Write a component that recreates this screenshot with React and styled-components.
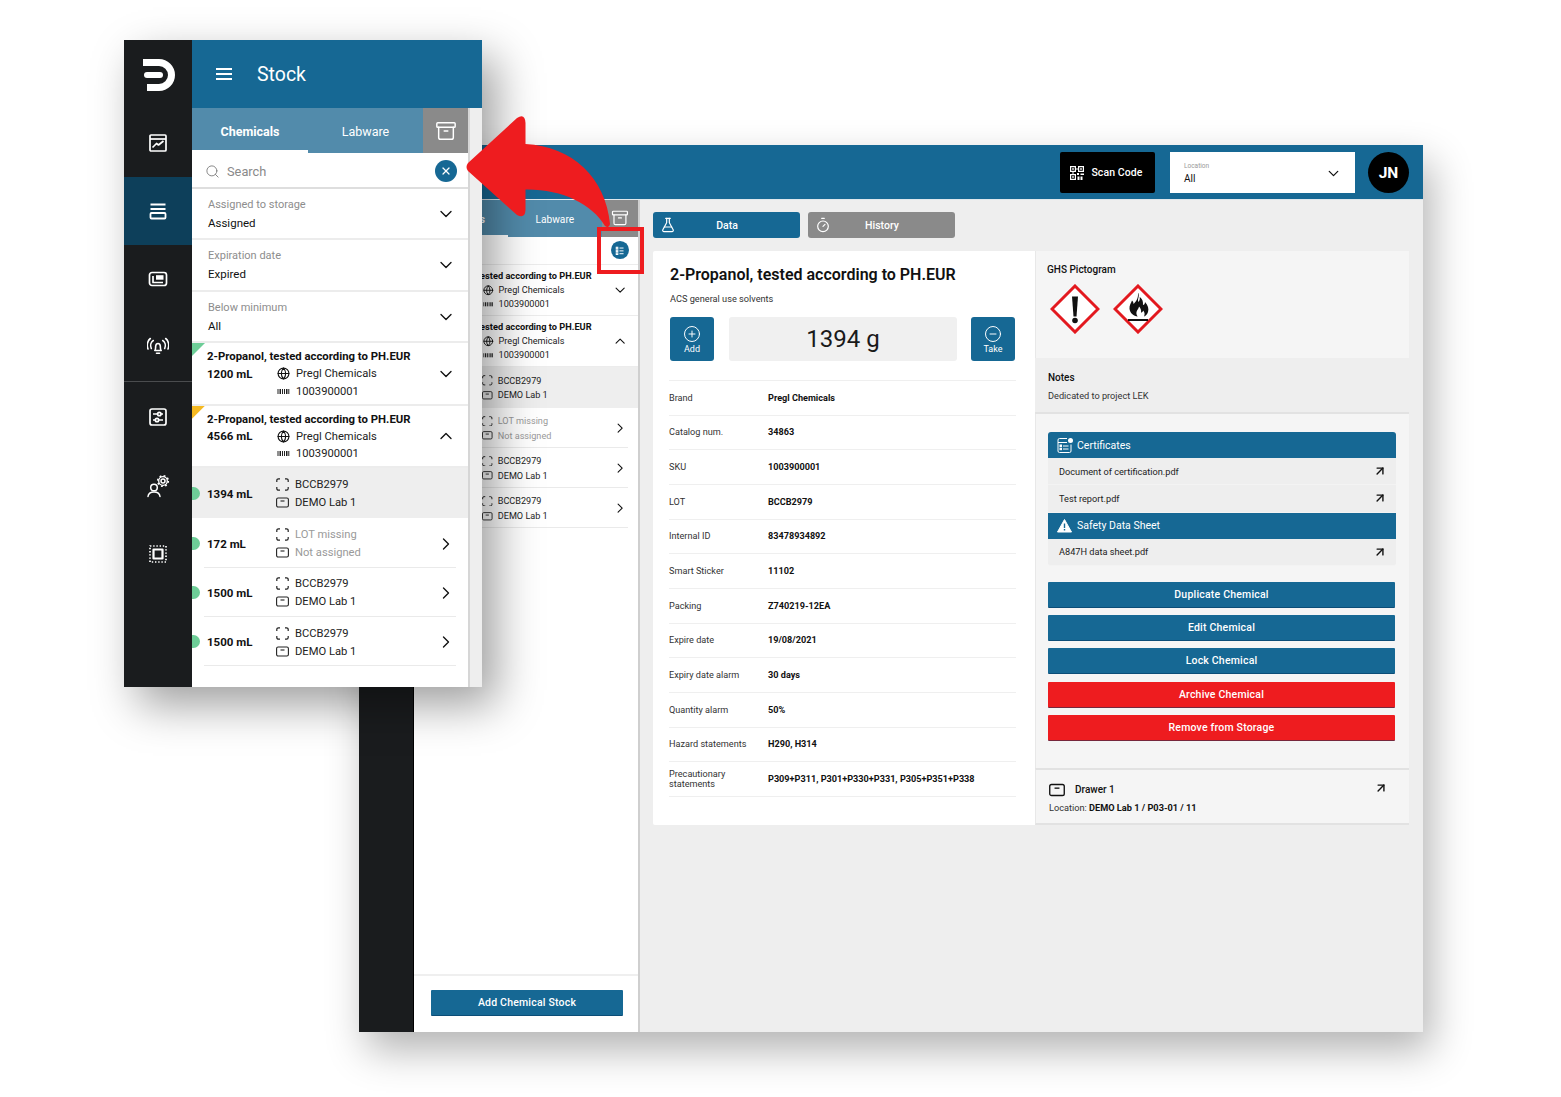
import React from 'react';
import styled, { createGlobalStyle } from 'styled-components';
import { Archive, Search, X, ChevronDown, ChevronUp, ChevronRight, Globe, FlaskConical, Timer, CirclePlus, CircleMinus, ArrowUpRight } from 'lucide-react';

const BLUE = '#166894';
const DARK = '#1a1c1e';
const GREEN = '#6dcd97';
const RED = '#ee1c1f';

const Global = createGlobalStyle`
  html, body { margin: 0; padding: 0; background: #fff; }
  * { box-sizing: border-box; }
  body { font-family: Roboto, "Liberation Sans", sans-serif; color: #111; }
`;

const Stage = styled.div`
  position: relative;
  width: 1561px;
  height: 1097px;
  overflow: hidden;
  background: #fff;
`;

/* ---------- windows on the canvas ---------- */
const BackWindow = styled.div`
  position: absolute;
  left: 359px;
  top: 145px;
  width: 1064px;
  height: 887px;
  display: flex;
  background: #eee;
  box-shadow: 8px 18px 38px rgba(0, 0, 0, 0.3);
`;
const FrontWindow = styled.div`
  position: absolute;
  left: 124px;
  top: 40px;
  width: 358px;
  height: 647px;
  display: flex;
  background: #eee;
  box-shadow: 14px 18px 42px rgba(0, 0, 0, 0.38);
`;

/* ---------- front sidebar ---------- */
const Rail = styled.nav`
  width: 68px;
  flex: none;
  background: ${DARK};
  display: flex;
  flex-direction: column;
`;
const BackRail = styled.div`
  width: 55px;
  flex: none;
  background: ${DARK};
  border-right: 1px solid #000;
`;
const RailItem = styled.div`
  height: ${p => p.$h || 68}px;
  display: flex;
  align-items: center;
  justify-content: center;
  background: ${p => (p.$active ? '#0d3f5a' : 'transparent')};
  border-bottom: ${p => (p.$divider ? '1px solid #4a4c4e' : '0')};
`;

/* ---------- headers ---------- */
const Column = styled.div`
  flex: 1;
  min-width: 0;
  display: flex;
  flex-direction: column;
`;
const StockHeader = styled.header`
  height: 68px;
  flex: none;
  background: ${BLUE};
  color: #fff;
  display: flex;
  align-items: center;
  padding-left: 23px;
  gap: 24px;
`;
const HeaderTitle = styled.h1`
  margin: 1px 0 0;
  font-size: 19.5px;
  font-weight: 400;
  color: #fff;
`;
const TopBar = styled.header`
  height: 55px;
  flex: none;
  background: ${BLUE};
  border-bottom: 1px solid #dfe7ec;
  padding: 1px 14px 0 0;
  display: flex;
  align-items: center;
  justify-content: flex-end;
`;
const ScanButton = styled.button`
  width: 95px;
  height: 41px;
  border: 0;
  border-radius: 2px;
  background: #000;
  color: #fff;
  font: 500 10.5px Roboto, sans-serif;
  letter-spacing: 0.1px;
  display: flex;
  align-items: center;
  justify-content: center;
  gap: 7px;
  padding-right: 8px;
`;
const LocationSelect = styled.div`
  width: 185px;
  height: 41px;
  margin-left: 15px;
  background: #fff;
  padding: 1px 13px 0 14px;
  display: flex;
  justify-content: space-between;
  align-items: center;
`;
const LocationLabel = styled.div`
  font-size: 6.5px;
  color: #999;
  line-height: 8px;
`;
const LocationValue = styled.div`
  font-size: 10px;
  line-height: 13px;
  margin-top: 2px;
  color: #111;
`;
const Avatar = styled.div`
  width: 41px;
  height: 41px;
  margin-left: 13px;
  border-radius: 50%;
  background: #000;
  color: #fff;
  font-weight: 700;
  font-size: 15.5px;
  display: flex;
  align-items: center;
  justify-content: center;
`;

/* ---------- stock list (shared) ---------- */
const FrontBody = styled.div`
  flex: 1;
  display: flex;
  min-height: 0;
`;
const StockPanel = styled.section`
  width: 278px;
  flex: none;
  background: #fff;
  border-right: 2px solid #d6d6d6;
  display: flex;
  flex-direction: column;
`;
const Tabs = styled.div`
  height: 45px;
  flex: none;
  display: flex;
  background: #528bab;
`;
const Tab = styled.div`
  width: ${p => p.$w}px;
  display: flex;
  align-items: center;
  justify-content: center;
  color: #fff;
  font-size: 12.5px;
  font-weight: ${p => (p.$active ? 700 : 400)};
  border-bottom: 3px solid ${p => (p.$active ? '#fff' : 'transparent')};
  padding-top: 5px;
`;
const ArchiveTab = styled.div`
  width: 45px;
  background: #8a8a8a;
  color: #fff;
  display: flex;
  align-items: center;
  justify-content: center;
`;
const SearchRow = styled.div`
  height: 36px;
  flex: none;
  display: flex;
  align-items: center;
  padding: 2px 11px 0 13px;
  border-bottom: 2px solid #dedede;
  color: #8a8a8a;
  font-size: 12.8px;
  gap: 7px;
`;
const RoundButton = styled.span`
  width: ${p => p.$s || 22}px;
  height: ${p => p.$s || 22}px;
  margin-left: auto;
  border-radius: 50%;
  background: ${BLUE};
  color: #fff;
  display: flex;
  align-items: center;
  justify-content: center;
`;
const FilterRow = styled.div`
  height: 51.33px;
  flex: none;
  display: flex;
  align-items: center;
  justify-content: space-between;
  padding: 1px 12px 0 16px;
  border-bottom: 2px solid #ececec;
`;
const FilterLabel = styled.div`
  font-size: 11px;
  color: #8d8d8d;
  line-height: 18px;
`;
const FilterValue = styled.div`
  font-size: 11.5px;
  line-height: 18px;
  color: #111;
`;
const ChemItem = styled.article`
  position: relative;
  height: 62.7px;
  flex: none;
  padding: 4px 12px 0 15px;
  border-bottom: 2px solid #ececec;
  display: grid;
  grid-template-columns: 70px 1fr 24px;
  grid-template-rows: 18px 17.5px 17.5px;
  align-items: center;
`;
const Corner = styled.i`
  position: absolute;
  left: 0;
  top: 0;
  width: 13px;
  height: 13px;
  background: ${p => p.$c};
  clip-path: polygon(0 0, 100% 0, 0 100%);
`;
const ChemName = styled.div`
  grid-column: 1 / -1;
  font-size: 11.35px;
  font-weight: 700;
  white-space: nowrap;
`;
const Qty = styled.div`
  font-size: 11.5px;
  font-weight: 700;
`;
const Meta = styled.div`
  display: flex;
  align-items: center;
  gap: 6px;
  font-size: 11.2px;
  color: ${p => (p.$muted ? '#9a9a9a' : '#222')};
  white-space: nowrap;
`;
const ChevronCell = styled.div`
  grid-row: 2;
  grid-column: 3;
  display: flex;
  justify-content: flex-end;
`;
const LotRow = styled.div`
  position: relative;
  height: ${p => p.$h || 49.3}px;
  flex: none;
  display: grid;
  grid-template-columns: 69px 1fr 24px;
  align-items: center;
  padding: 1px 12px 0 15px;
  background: ${p => (p.$active ? '#eee' : 'transparent')};
  &::after {
    content: '';
    display: ${p => (p.$active ? 'none' : 'block')};
    position: absolute;
    left: 12px;
    right: 12px;
    bottom: 0;
    height: 1px;
    background: #eaeaea;
  }
`;
const Dot = styled.i`
  position: absolute;
  left: 0;
  top: 50%;
  margin-top: -6.5px;
  width: 8px;
  height: 13px;
  border-radius: 0 8px 8px 0;
  background: ${GREEN};
`;
const LotMeta = styled.div`
  display: grid;
  grid-auto-rows: 18px;
  align-items: center;
`;

/* ---------- back window list ---------- */
const BackList = styled.section`
  width: 226px;
  flex: none;
  background: #fff;
  border-right: 2px solid #cfcfcf;
  display: flex;
  flex-direction: column;
`;
const Zoomed = styled.div`
  zoom: 0.8135;
  flex: 1;
  min-height: 0;
  display: flex;
  flex-direction: column;
  overflow: hidden;
`;
const IconRow = styled.div`
  height: 35.2px;
  flex: none;
  display: flex;
  align-items: center;
  padding: 0 11px 0 0;
  border-bottom: 2px solid #ececec;
`;
const ListFooter = styled.div`
  height: 58px;
  flex: none;
  border-top: 2px solid #efefef;
  padding: 14px 15px 0 17px;
`;
const ActionButton = styled.button`
  display: block;
  width: 100%;
  height: 26px;
  border: 0;
  border-bottom: 1px solid rgba(0, 50, 90, 0.5);
  border-radius: 1px;
  background: ${p => (p.$danger ? RED : BLUE)};
  color: #fff;
  font: 500 10.5px Roboto, sans-serif;
  letter-spacing: 0.2px;
  cursor: pointer;
`;

/* ---------- main area ---------- */
const Body = styled.div`
  flex: 1;
  min-height: 0;
  display: flex;
`;
const Main = styled.main`
  flex: 1;
  min-width: 0;
  padding: 12px 14px 0 13px;
`;
const MainTabs = styled.div`
  display: flex;
  gap: 8px;
  margin-bottom: 13px;
`;
const MainTab = styled.div`
  position: relative;
  width: 147px;
  height: 26px;
  border-radius: 3px;
  background: ${p => (p.$grey ? '#8a8a8a' : BLUE)};
  color: #fff;
  font-size: 10.5px;
  font-weight: 500;
  display: flex;
  align-items: center;
  justify-content: center;
  padding-left: 1px;
  & > svg {
    position: absolute;
    left: 7px;
    top: 5px;
  }
`;
const Card = styled.div`
  display: flex;
  height: 574px;
`;
const DataPane = styled.div`
  width: 382px;
  flex: none;
  background: #fff;
  padding: 13px 19px 0 16px;
  border-radius: 2px 0 0 2px;
`;
const Title = styled.h2`
  margin: 0 0 0 1px;
  font-size: 16px;
  line-height: 22px;
  font-weight: 600;
`;
const Subtitle = styled.p`
  margin: 7px 0 0 1px;
  font-size: 9.2px;
  line-height: 12px;
  color: #333;
`;
const QtyRow = styled.div`
  display: flex;
  margin: 12px 0 19px 1px;
  height: 44px;
`;
const QtyButton = styled.button`
  width: 44px;
  height: 44px;
  flex: none;
  border: 0;
  border-radius: 3px;
  background: ${BLUE};
  color: #fff;
  font: 400 9px Roboto, sans-serif;
  display: flex;
  flex-direction: column;
  align-items: center;
  justify-content: center;
  gap: 1px;
  padding: 1px 0 0;
`;
const QtyValue = styled.div`
  width: 228px;
  margin: 0 14px 0 15px;
  border-radius: 3px;
  background: #f0f0f0;
  font-size: 24px;
  display: flex;
  align-items: center;
  justify-content: center;
  color: #1a1a1a;
`;
const Rows = styled.div`
  border-bottom: 1px solid #efefef;
`;
const DataRow = styled.div`
  height: 34.68px;
  display: grid;
  grid-template-columns: 99px 1fr;
  align-items: center;
  border-top: 1px solid #efefef;
  font-size: 9.15px;
  line-height: 10.5px;
`;
const RowLabel = styled.div`
  color: #333;
`;
const RowValue = styled.div`
  font-weight: 700;
  color: #111;
`;
const SidePane = styled.div`
  flex: 1;
  display: flex;
  flex-direction: column;
  min-width: 0;
`;
const GhsBox = styled.div`
  height: 107px;
  flex: none;
  background: #f5f5f5;
  border-left: 1px solid #e8e8e8;
  padding: 12px 12px 0 11px;
`;
const SmallHead = styled.div`
  font-size: 10px;
  font-weight: 500;
  line-height: 13px;
  color: #111;
`;
const Pictos = styled.div`
  display: flex;
  margin: 8px 0 0 3px;
  gap: 13px;
`;
const NotesBox = styled.div`
  height: 56px;
  flex: none;
  padding: 13px 12px 0 13px;
  border-bottom: 2px solid #e2e2e2;
`;
const NoteText = styled.div`
  font-size: 9.2px;
  line-height: 12px;
  margin-top: 6px;
  color: #333;
`;
const ActionsBox = styled.div`
  flex: 1;
  background: #f5f5f5;
  border-left: 1px solid #e8e8e8;
  padding: 18px 13px 0 12px;
`;
const DocHead = styled.div`
  height: 26px;
  background: ${BLUE};
  border-radius: ${p => (p.$top ? '3px 3px 0 0' : '0')};
  color: #fff;
  font-size: 10.5px;
  display: flex;
  align-items: center;
  gap: 3px;
  padding-left: 9px;
`;
const DocRow = styled.div`
  height: 27.3px;
  display: flex;
  align-items: center;
  justify-content: space-between;
  background: #eee;
  border-bottom: 1px solid #f3f3f3;
  padding: 0 9px 0 11px;
  font-size: 9.2px;
  color: #222;
  border-radius: ${p => (p.$last ? '0 0 3px 3px' : '0')};
`;
const ButtonStack = styled.div`
  display: flex;
  flex-direction: column;
  gap: 7.3px;
  margin: 16px 1px 0 0;
`;
const DrawerFoot = styled.div`
  height: 57px;
  flex: none;
  background: #f5f5f5;
  border-top: 2px solid #e2e2e2;
  border-bottom: 2px solid #e2e2e2;
  border-left: 1px solid #e8e8e8;
  padding: 11px 21px 0 13px;
`;
const DrawerTop = styled.div`
  display: flex;
  align-items: center;
  gap: 10px;
  font-size: 10px;
  font-weight: 500;
  height: 17px;
  & > svg:last-child {
    margin-left: auto;
    margin-top: -4px;
  }
`;
const DrawerLoc = styled.div`
  margin-top: 4px;
  font-size: 9.2px;
  line-height: 12px;
  color: #333;
  & > b {
    font-weight: 700;
    color: #111;
  }
`;

/* ---------- overlays ---------- */
const Arrow = styled.svg`
  position: absolute;
  left: 460px;
  top: 110px;
`;
const Highlight = styled.div`
  position: absolute;
  left: 597px;
  top: 227px;
  width: 47px;
  height: 47px;
  border: 4px solid ${RED};
`;

/* ---------- drawings ---------- */
const W = { fill: 'none', stroke: '#fff', strokeWidth: 1.8, strokeLinejoin: 'round' };

const Logo = () => (
  <svg width="36" height="36" viewBox="140 56 36 36" fill="none" stroke="#fff">
    <path d="M143 61.500H159a12.500 12.500 0 0 1 0 25H147" strokeWidth="7" />
    <path d="M147 74H160" strokeWidth="6" strokeLinecap="round" />
  </svg>
);
const Hamburger = () => (
  <svg width="18" height="14" viewBox="0 0 18 14" stroke="#fff" strokeWidth="2" fill="none">
    <path d="M1 2h16M1 7h16M1 12h16" />
  </svg>
);
const NavChart = () => (
  <svg width="20" height="20" viewBox="0 0 20 20" {...W} strokeWidth="1.700">
    <rect x="2" y="2" width="16" height="16" rx="1" />
    <path d="M2 6h16" />
    <path d="M4.500 14.500l4-4 2 1.500 5-4" />
  </svg>
);
const NavStock = () => (
  <svg width="20" height="20" viewBox="0 0 20 20" {...W} strokeWidth="1.800">
    <path d="M2.500 3.500h15M2.500 8h15" />
    <rect x="2.500" y="12" width="15" height="5.500" rx="1" />
  </svg>
);
const NavDrawer = () => (
  <svg width="20" height="20" viewBox="0 0 20 20" {...W} strokeWidth="1.700">
    <rect x="1.500" y="3.500" width="17" height="13" rx="2.500" />
    <path d="M5 7v6.500h10" />
    <rect x="8" y="6.200" width="7.500" height="4.500" fill="#fff" stroke="none" />
  </svg>
);
const NavAlarm = () => (
  <svg width="22" height="20" viewBox="0 0 22 20" {...W} strokeWidth="1.600" strokeLinecap="round">
    <path d="M7.800 13.500c1-1 .7-2.800.9-4.500.2-1.500 1-2.500 2.300-2.500s2.100 1 2.300 2.500c.2 1.700-.1 3.500.9 4.500z" />
    <path d="M9.500 16.300h3" />
    <path d="M6.300 3.500c-2.500 1.600-3.300 5-2 8M15.700 3.500c2.500 1.600 3.300 5 2 8" />
    <path d="M3.300 1.500C.3 3.800-.5 8.500 1 12M18.700 1.500c3 2.300 3.800 7 2.300 10.500" />
  </svg>
);
const NavSliders = () => (
  <svg width="20" height="20" viewBox="0 0 20 20" {...W} strokeWidth="1.700">
    <rect x="2" y="2" width="16" height="16" rx="2" />
    <path d="M5 7h4.500M13 7h2M5 13h2M11 13h4" />
    <circle cx="11.300" cy="7" r="1.700" />
    <circle cx="9" cy="13" r="1.700" />
  </svg>
);
const NavUserGear = () => (
  <svg width="24" height="24" viewBox="0 0 24 24" {...W} strokeWidth="1.500">
    <circle cx="8" cy="13.500" r="3.300" />
    <path d="M2 22.500c.3-3 2.800-4.600 6-4.600s5.700 1.600 6 4.600" strokeLinecap="round" />
    <circle cx="17" cy="7" r="2" />
    <circle cx="17" cy="7" r="4.300" strokeWidth="1.300" />
    <circle cx="17" cy="7" r="5.300" strokeDasharray="1.800 2.360" strokeWidth="1.600" />
  </svg>
);
const NavChip = () => (
  <svg width="20" height="20" viewBox="0 0 20 20" {...W} strokeWidth="1.500">
    <rect x="5.500" y="5.500" width="9" height="9" strokeWidth="2.200" />
    <rect x="2" y="2" width="16" height="16" strokeDasharray="1.400 1.800" strokeWidth="1.700" />
  </svg>
);
const LotIcon = () => (
  <svg width="13" height="13" viewBox="0 0 13 13" fill="none" stroke="#222" strokeWidth="1.200">
    <path d="M.8 4V2.500A1.700 1.700 0 0 1 2.500.8H4M9 .8h1.500a1.700 1.700 0 0 1 1.700 1.700V4M12.200 9v1.500a1.700 1.700 0 0 1-1.700 1.700H9M4 12.200H2.500A1.700 1.700 0 0 1 .8 10.500V9" />
  </svg>
);
const DrawerIcon = ({ size = 13, color = '#222' }) => (
  <svg width={size} height={size} viewBox="0 0 13 13" fill="none" stroke={color} strokeWidth="1.100">
    <rect x=".6" y="2" width="11.800" height="9" rx="1.500" />
    <path d="M4.500 5h4" />
  </svg>
);
const BarcodeIcon = () => (
  <svg width="13" height="13" viewBox="0 0 13 13" fill="#222">
    <rect x="0.500" y="4" width="1" height="5" />
    <rect x="2.500" y="4" width="1.500" height="5" />
    <rect x="5" y="4" width="1" height="5" />
    <rect x="7" y="4" width="1" height="5" />
    <rect x="9" y="4" width="1.500" height="5" />
    <rect x="11.300" y="4" width="1" height="5" />
  </svg>
);
const ListIcon = () => (
  <svg width="12" height="12" viewBox="0 0 12 12" fill="none" stroke="#fff" strokeWidth="1.200">
    <rect x="1.500" y="1.500" width="2" height="2" />
    <rect x="1.500" y="5" width="2" height="2" />
    <rect x="1.500" y="8.500" width="2" height="2" />
    <path d="M5.500 2.500h5M5.500 6h5M5.500 9.500h5" />
  </svg>
);
const QrIcon = () => (
  <svg width="14" height="14" viewBox="0 0 14 14" fill="#fff">
    <path fillRule="evenodd" d="M0 0h6v6H0zM1.200 1.200v3.600h3.600V1.200zM8 0h6v6H8zM9.200 1.200v3.600h3.600V1.200zM0 8h6v6H0zM1.200 9.200v3.600h3.600V9.200z" />
    <rect x="2.200" y="2.200" width="1.600" height="1.600" />
    <rect x="10.200" y="2.200" width="1.600" height="1.600" />
    <rect x="2.200" y="10.200" width="1.600" height="1.600" />
    <rect x="7" y="7" width="2" height="2" />
    <rect x="6.500" y="2" width="1" height="2" />
    <rect x="10.500" y="7.500" width="3.500" height="1.500" />
    <rect x="7.500" y="10.500" width="2" height="3.500" />
    <rect x="10.500" y="10.500" width="2" height="3.500" />
    <rect x="2" y="6.500" width="2" height="1" />
  </svg>
);
const CertIcon = () => (
  <svg width="17" height="17" viewBox="0 0 17 17" fill="none" stroke="#fff" strokeWidth="1">
    <path d="M10 1.500H2.500a1.500 1.500 0 0 0-1.500 1.500v11a1.500 1.500 0 0 0 1.500 1.500h10a1.500 1.500 0 0 0 1.500-1.500V7.500" />
    <path d="M1 5.500h9M6 9h5.500M6 12h5.500" />
    <rect x="3" y="8" width="1.500" height="1.500" fill="#fff" />
    <rect x="3" y="11.200" width="1.500" height="1.500" fill="#fff" />
    <circle cx="13.500" cy="3.500" r="2.500" fill="#fff" stroke="none" />
  </svg>
);
const WarnIcon = () => (
  <svg width="17" height="14" viewBox="0 0 17 14">
    <path d="M7.500.5L14.500 13H.5z" fill="#fff" stroke="#fff" strokeLinejoin="round" />
    <rect x="6.800" y="4.500" width="1.400" height="4.500" fill={BLUE} />
    <rect x="6.800" y="10" width="1.400" height="1.500" fill={BLUE} />
  </svg>
);
const Diamond = ({ children }) => (
  <svg width="50" height="50" viewBox="0 0 50 50">
    <path d="M25 2L48 25 25 48 2 25z" fill="#fff" stroke="#e3191f" strokeWidth="3" strokeLinejoin="miter" />
    {children}
  </svg>
);
const ExclaimMark = () => (
  <Diamond>
    <path d="M22 12.500h6l-1.500 20h-3z" fill="#111" />
    <circle cx="25" cy="36.500" r="2.800" fill="#111" />
  </Diamond>
);
const FlameMark = () => (
  <Diamond>
    <path fill="#111" d="M25.500 9.500c1 4-1.500 5.500 0 8.500 1-1 1.500-3 1.200-5 3.800 3 3.300 6 3.300 8 1 0 2-1 2-3 3 3 4 7 3 10-.8 2.500-2.500 4-4 4.500 1-2 .8-4-.8-6-.5 1.500-1.300 2-2.200 2 .5-2.500-.5-4.500-2-6-.2 2-2 3.500-2.500 5.500-.3 1.700.2 3.200 1.200 4.500-4-.5-8-3.500-8.200-8-.2-3.500 1.500-5 2.500-8 1 1 1.500 2 1.500 3.500 2-2 5-5 4.500-11z" />
    <rect x="15" y="35" width="20" height="2" fill="#111" />
  </Diamond>
);

/* ---------- shared list ---------- */
const ChemEntry = ({ corner, qty, open }) => (
  <ChemItem>
    {corner && <Corner $c={corner} />}
    <ChemName>2-Propanol, tested according to PH.EUR</ChemName>
    <Qty>{qty}</Qty>
    <Meta><Globe size={13} strokeWidth={2.1} color="#111" /> Pregl Chemicals</Meta>
    <ChevronCell>
      {open ? <ChevronUp size={20} strokeWidth={1.6} color="#111" /> : <ChevronDown size={20} strokeWidth={1.6} color="#111" />}
    </ChevronCell>
    <span />
    <Meta><BarcodeIcon /> 1003900001</Meta>
  </ChemItem>
);
const LotEntry = ({ qty, lot, place, active, muted }) => (
  <LotRow $active={active} $h={active ? 50 : undefined}>
    <Dot />
    <Qty>{qty}</Qty>
    <LotMeta>
      <Meta $muted={muted}><LotIcon /> {lot}</Meta>
      <Meta $muted={muted}><DrawerIcon /> {place}</Meta>
    </LotMeta>
    {!active && <ChevronRight size={20} strokeWidth={1.6} color="#111" style={{ justifySelf: 'end' }} />}
  </LotRow>
);
const StockTabs = () => (
  <Tabs>
    <Tab $w={116} $active>Chemicals</Tab>
    <Tab $w={115}>Labware</Tab>
    <ArchiveTab><Archive size={22} strokeWidth={1.6} /></ArchiveTab>
  </Tabs>
);
const StockEntries = () => (
  <>
    <ChemEntry corner={GREEN} qty="1200 mL" />
    <ChemEntry corner="#f5b921" qty="4566 mL" open />
    <LotEntry active qty="1394 mL" lot="BCCB2979" place="DEMO Lab 1" />
    <LotEntry muted qty="172 mL" lot="LOT missing" place="Not assigned" />
    <LotEntry qty="1500 mL" lot="BCCB2979" place="DEMO Lab 1" />
    <LotEntry qty="1500 mL" lot="BCCB2979" place="DEMO Lab 1" />
  </>
);

const DATA = [
  ['Brand', 'Pregl Chemicals'],
  ['Catalog num.', '34863'],
  ['SKU', '1003900001'],
  ['LOT', 'BCCB2979'],
  ['Internal ID', '83478934892'],
  ['Smart Sticker', '11102'],
  ['Packing', 'Z740219-12EA'],
  ['Expire date', '19/08/2021'],
  ['Expiry date alarm', '30 days'],
  ['Quantity alarm', '50%'],
  ['Hazard statements', 'H290, H314'],
  ['Precautionary statements', 'P309+P311, P301+P330+P331, P305+P351+P338'],
];
const FILTERS = [
  ['Assigned to storage', 'Assigned'],
  ['Expiration date', 'Expired'],
  ['Below minimum', 'All'],
];
const Open = () => <ArrowUpRight size={14} strokeWidth={2.4} color="#111" />;

export default function App() {
  return (
    <Stage>
      <Global />
      <BackWindow>
        <BackRail />
        <Column>
          <TopBar>
            <ScanButton><QrIcon /> Scan Code</ScanButton>
            <LocationSelect>
              <div>
                <LocationLabel>Location</LocationLabel>
                <LocationValue>All</LocationValue>
              </div>
              <ChevronDown size={17} strokeWidth={1.8} color="#111" />
            </LocationSelect>
            <Avatar>JN</Avatar>
          </TopBar>
          <Body>
            <BackList>
              <Zoomed>
                <StockTabs />
                <IconRow><RoundButton $s={22}><ListIcon /></RoundButton></IconRow>
                <StockEntries />
              </Zoomed>
              <ListFooter><ActionButton>Add Chemical Stock</ActionButton></ListFooter>
            </BackList>
            <Main>
              <MainTabs>
                <MainTab><FlaskConical size={16} strokeWidth={1.8} /> Data</MainTab>
                <MainTab $grey><Timer size={16} strokeWidth={1.8} /> History</MainTab>
              </MainTabs>
              <Card>
                <DataPane>
                  <Title>2-Propanol, tested according to PH.EUR</Title>
                  <Subtitle>ACS general use solvents</Subtitle>
                  <QtyRow>
                    <QtyButton><CirclePlus size={18} strokeWidth={1.3} /> Add</QtyButton>
                    <QtyValue>1394 g</QtyValue>
                    <QtyButton><CircleMinus size={18} strokeWidth={1.3} /> Take</QtyButton>
                  </QtyRow>
                  <Rows>
                    {DATA.map(([k, v]) => (
                      <DataRow key={k}>
                        <RowLabel>{k}</RowLabel>
                        <RowValue>{v}</RowValue>
                      </DataRow>
                    ))}
                  </Rows>
                </DataPane>
                <SidePane>
                  <GhsBox>
                    <SmallHead>GHS Pictogram</SmallHead>
                    <Pictos><ExclaimMark /><FlameMark /></Pictos>
                  </GhsBox>
                  <NotesBox>
                    <SmallHead>Notes</SmallHead>
                    <NoteText>Dedicated to project LEK</NoteText>
                  </NotesBox>
                  <ActionsBox>
                    <DocHead $top><CertIcon /> Certificates</DocHead>
                    <DocRow>Document of certification.pdf <Open /></DocRow>
                    <DocRow>Test report.pdf <Open /></DocRow>
                    <DocHead><WarnIcon /> Safety Data Sheet</DocHead>
                    <DocRow $last>A847H data sheet.pdf <Open /></DocRow>
                    <ButtonStack>
                      <ActionButton>Duplicate Chemical</ActionButton>
                      <ActionButton>Edit Chemical</ActionButton>
                      <ActionButton>Lock Chemical</ActionButton>
                      <ActionButton $danger>Archive Chemical</ActionButton>
                      <ActionButton $danger>Remove from Storage</ActionButton>
                    </ButtonStack>
                  </ActionsBox>
                  <DrawerFoot>
                    <DrawerTop>
                      <DrawerIcon size={16} color="#111" /> Drawer 1 <Open />
                    </DrawerTop>
                    <DrawerLoc>Location: <b>DEMO Lab 1 / P03-01 / 11</b></DrawerLoc>
                  </DrawerFoot>
                </SidePane>
              </Card>
            </Main>
          </Body>
        </Column>
      </BackWindow>

      <FrontWindow>
        <Rail>
          <RailItem $h={69}><Logo /></RailItem>
          <RailItem><NavChart /></RailItem>
          <RailItem $active><NavStock /></RailItem>
          <RailItem><NavDrawer /></RailItem>
          <RailItem $divider $h={69}><NavAlarm /></RailItem>
          <RailItem $h={69}><NavSliders /></RailItem>
          <RailItem $h={69}><NavUserGear /></RailItem>
          <RailItem><NavChip /></RailItem>
        </Rail>
        <Column>
          <StockHeader>
            <Hamburger />
            <HeaderTitle>Stock</HeaderTitle>
          </StockHeader>
          <FrontBody>
            <StockPanel>
              <StockTabs />
              <SearchRow>
                <Search size={15} strokeWidth={1.4} color="#777" /> Search
                <RoundButton><X size={12} strokeWidth={2.4} /></RoundButton>
              </SearchRow>
              {FILTERS.map(([k, v]) => (
                <FilterRow key={k}>
                  <div>
                    <FilterLabel>{k}</FilterLabel>
                    <FilterValue>{v}</FilterValue>
                  </div>
                  <ChevronDown size={20} strokeWidth={1.6} color="#111" />
                </FilterRow>
              ))}
              <StockEntries />
            </StockPanel>
          </FrontBody>
        </Column>
      </FrontWindow>

      <Arrow width="160" height="130" viewBox="460 110 160 130">
        <path
          fill={RED}
          d="M468 163 L517 118 Q525 113 525.500 123 L525.500 144 C572 146 606 178 610 224 Q609 229 605 226 C592 204 562 189 525.500 189.500 L525.500 210 Q525 219 517 215 L468 171 Q465 167 468 163 Z"
        />
      </Arrow>
      <Highlight />
    </Stage>
  );
}
